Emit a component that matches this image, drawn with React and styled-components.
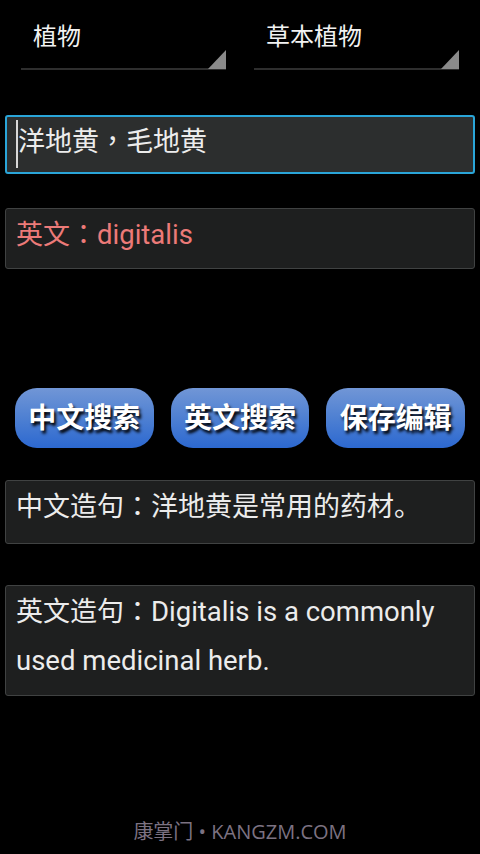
import React from 'react';
import styled, { createGlobalStyle } from 'styled-components';

const GlobalStyle = createGlobalStyle`
  html, body {
    margin: 0;
    padding: 0;
    background: #000;
  }
  body {
    font-family: "Noto Sans CJK SC", "Roboto", sans-serif;
  }
`;

const Screen = styled.div`
  width: 480px;
  min-height: 854px;
  background: #000;
  display: flex;
  flex-direction: column;
  box-sizing: border-box;
`;

const SpinnerRow = styled.div`
  display: flex;
  gap: 28px;
  padding: 0 21px;
  height: 70px;
`;

const Spinner = styled.div`
  position: relative;
  flex: 1;
  display: flex;
  align-items: center;
  padding: 0 0 0 12px;
  height: 70px;
  box-sizing: border-box;
  border-bottom: 2px solid #2e2e2e;
  color: #f2f2f2;
  font-size: 24px;

  &::after {
    content: '';
    position: absolute;
    right: 0;
    bottom: -1px;
    width: 0;
    height: 0;
    border-left: 18px solid transparent;
    border-bottom: 19px solid #8a8a8a;
  }
`;

const Field = styled.div`
  margin: ${(p) => p.$top}px 5px 0;
  box-sizing: border-box;
  height: ${(p) => p.$height}px;
  display: flex;
  align-items: center;
  padding: 0 10px 10px;
  border-radius: 3px;
  background: ${(p) => (p.$focused ? '#2c2e2e' : '#1e1f1f')};
  border: ${(p) => (p.$focused ? '2px solid #2aa5d8' : '1px solid #404242')};
  color: ${(p) => p.$color || '#ececec'};
  font-size: 27px;
  line-height: 36px;
`;

const Caret = styled.span`
  display: inline-block;
  width: 2px;
  height: 48px;
  background: #d8d8d8;
  margin: 8px 0 0 -1px;
  align-self: center;
`;

const Latin = styled.span`
  font-family: "Roboto", "Noto Sans CJK SC", sans-serif;
  font-size: 27.5px;
`;

const Punct = styled.span`
  font-family: "Noto Sans CJK TC", "Noto Sans CJK SC", sans-serif;
`;

const ButtonRow = styled.div`
  display: flex;
  gap: 17px;
  padding: 0 15px;
  margin-top: 119px;
`;

const BlueButton = styled.button`
  width: 139px;
  height: 60px;
  border: none;
  border-radius: 22px;
  background: linear-gradient(180deg, #7196d6 0%, #4e80d2 50%, #2c68d0 100%);
  color: #fff;
  font-family: "Noto Sans CJK SC", sans-serif;
  font-weight: 700;
  font-size: 28px;
  padding: 0 0 4px;
  text-shadow: 2px 3px 3px #000;
  display: flex;
  align-items: center;
  justify-content: center;
`;

const Sentence = styled.div`
  margin: ${(p) => p.$top}px 5px 0;
  box-sizing: border-box;
  padding: 0 10px ${(p) => p.$bottom}px 10px;
  border-radius: 3px;
  background: #1e1f1f;
  border: 1px solid #404242;
  color: #ececec;
  font-size: 27px;
  line-height: 47px;
`;

const Footer = styled.div`
  margin-top: auto;
  padding-bottom: 11px;
  text-align: center;
  color: #7c7282;
  font-family: "Open Sans", "Noto Sans CJK SC", sans-serif;
  font-size: 20px;
  line-height: 22px;
`;

const App = () => (
  <Screen>
    <GlobalStyle />
    <SpinnerRow>
      <Spinner>植物</Spinner>
      <Spinner>草本植物</Spinner>
    </SpinnerRow>

    <Field $top={45} $height={59} $focused>
      <Caret />
      <span>
        洋地黄<Punct>，</Punct>毛地黄
      </span>
    </Field>

    <Field $top={34} $height={61} $color="#ec7a78">
      <span>
        英文<Punct>：</Punct>
        <Latin>digitalis</Latin>
      </span>
    </Field>

    <ButtonRow>
      <BlueButton>中文搜索</BlueButton>
      <BlueButton>英文搜索</BlueButton>
      <BlueButton>保存编辑</BlueButton>
    </ButtonRow>

    <Sentence $top={32} $bottom={15}>
      中文造句<Punct>：</Punct>洋地黄是常用的药材。
    </Sentence>

    <Sentence $top={41} $bottom={11}>
      英文造句<Punct>：</Punct>
      <Latin>Digitalis is a commonly used medicinal herb.</Latin>
    </Sentence>

    <Footer>康掌门 • KANGZM.COM</Footer>
  </Screen>
);

export default App;
